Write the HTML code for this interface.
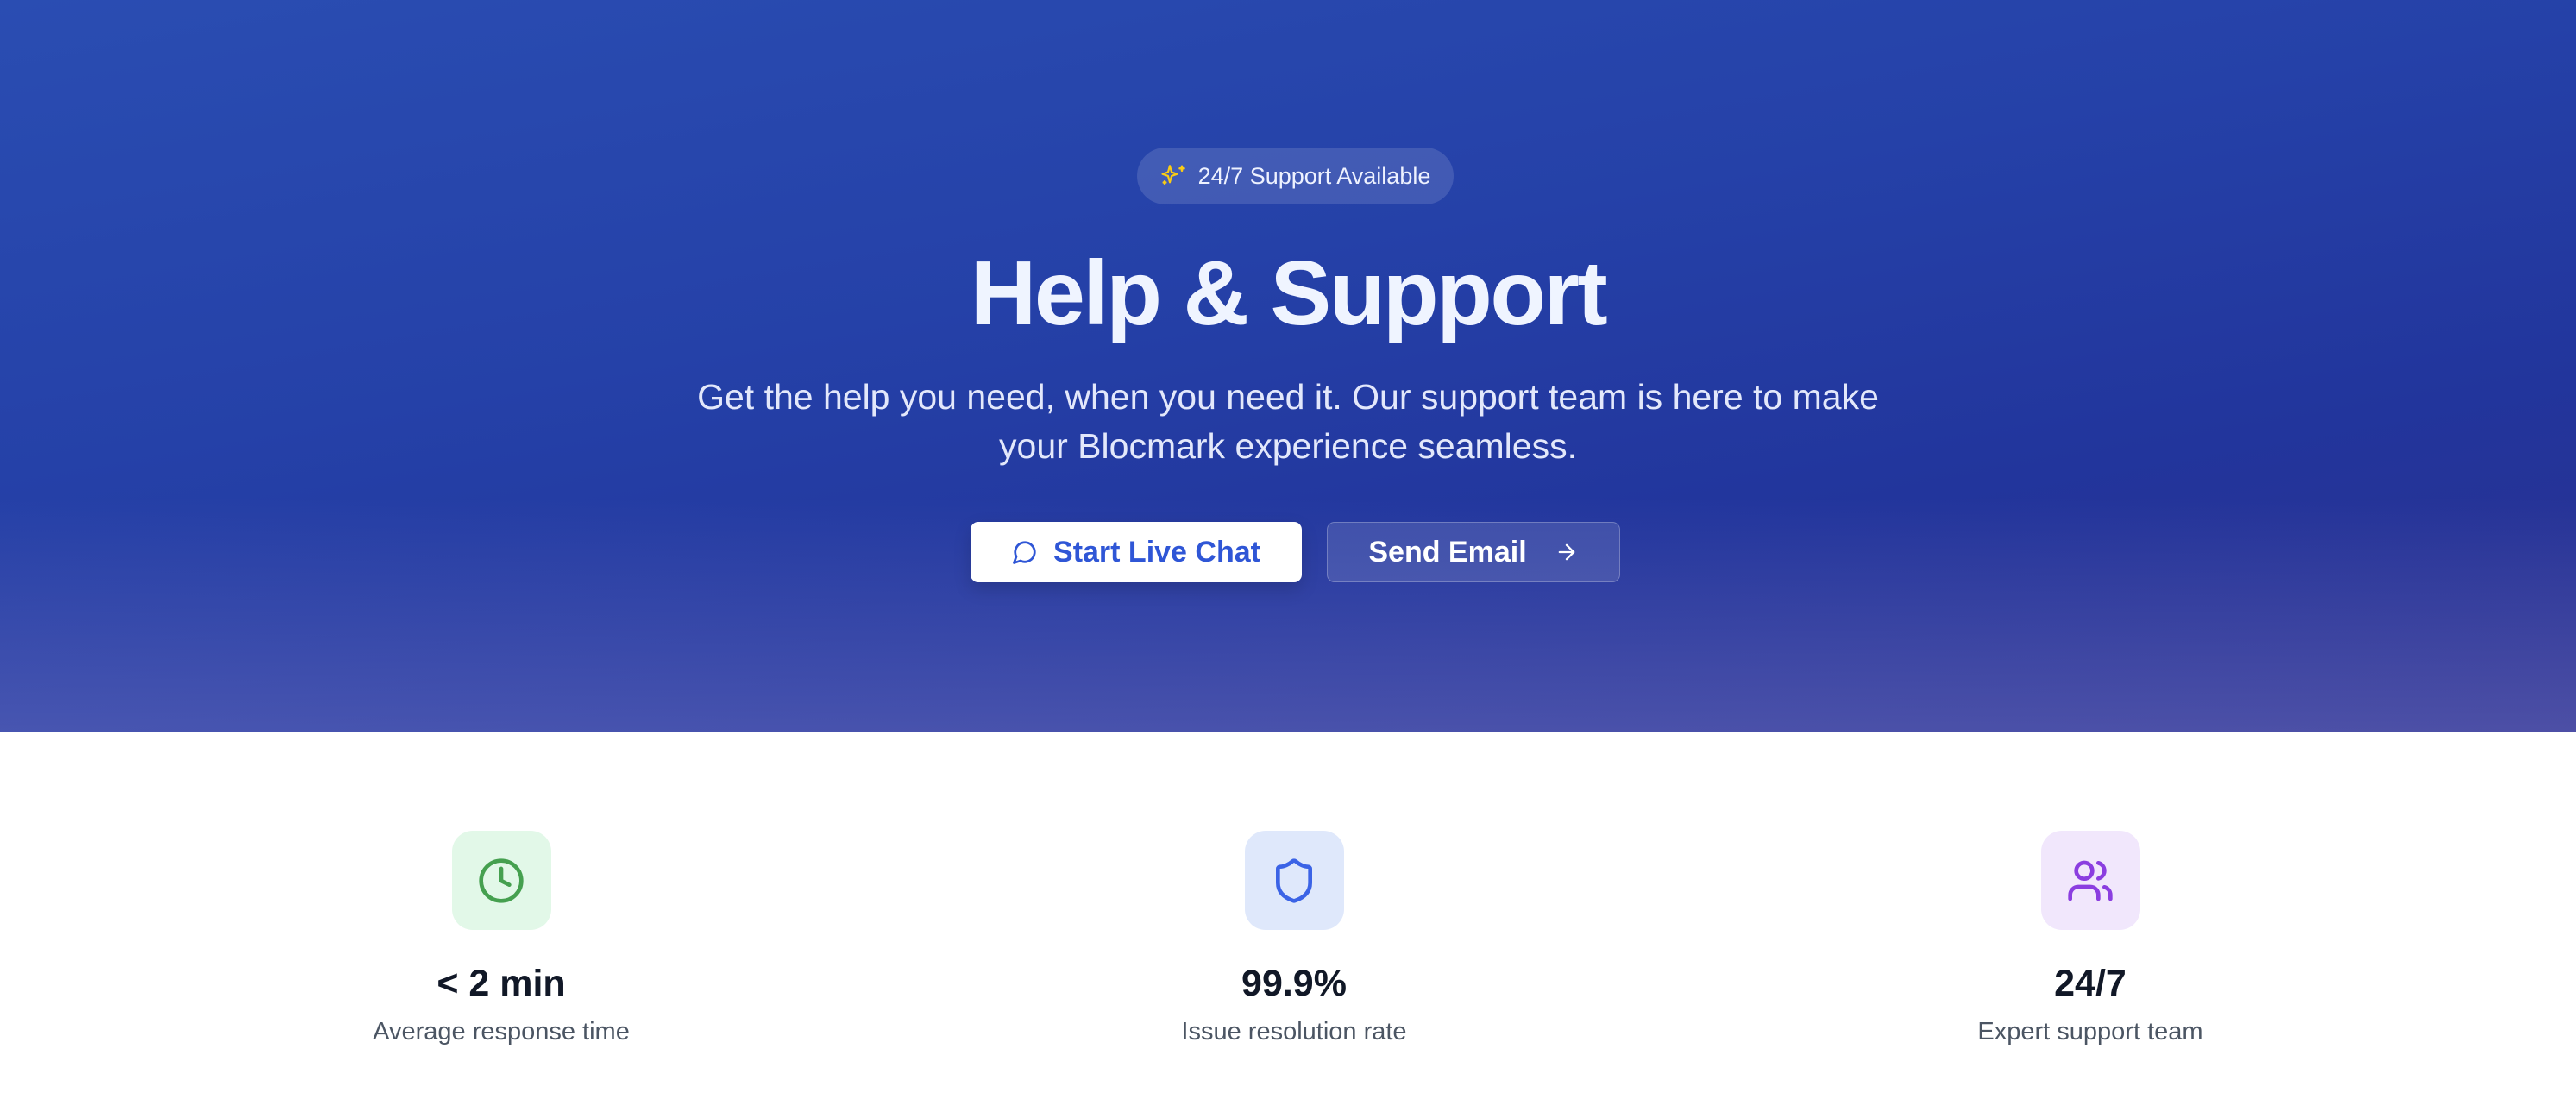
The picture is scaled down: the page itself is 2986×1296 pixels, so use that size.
<!DOCTYPE html>
<html><head><meta charset="utf-8"><style>
*{margin:0;padding:0;box-sizing:border-box}
body{width:2986px;height:1296px;overflow:hidden;background:#fff;font-family:"Liberation Sans",sans-serif}
.hero{position:absolute;left:0;top:0;width:2986px;height:849px;
background:
linear-gradient(180deg,rgba(255,255,255,0) 0%,rgba(255,255,255,0) 68%,rgba(140,140,210,0.35) 100%),
linear-gradient(170deg,#2a4db2 0%,#2541a8 40%,#22359c 70%,#2b2f8e 100%);}
.badge{position:absolute;left:1318px;top:171px;width:367px;height:66px;border-radius:33px;background:rgba(255,255,255,0.13);color:#eef2ff;font-size:27px;display:flex;align-items:center;justify-content:center;gap:14px}
h1{position:absolute;left:0;width:2986px;top:270px;text-align:center;color:#eff4ff;font-size:106px;font-weight:bold;letter-spacing:-2.5px;line-height:140px}
.sub{position:absolute;left:0;width:2986px;top:432px;text-align:center;color:#e3e8fb;font-size:41px;line-height:57px}
.btn{position:absolute;top:605px;height:70px;border-radius:9px;display:flex;align-items:center;justify-content:center;font-size:34px;font-weight:bold;gap:18px}
.b1{left:1125px;width:384px;background:#fff;color:#2f56d6;box-shadow:0 8px 20px rgba(0,0,0,0.15)}
.b2{left:1538px;width:340px;background:rgba(255,255,255,0.12);border:1.5px solid rgba(255,255,255,0.25);color:#fff}
.stat{position:absolute;top:963px;width:600px;text-align:center}
.ic{width:115px;height:115px;border-radius:24px;margin:0 auto;display:flex;align-items:center;justify-content:center}
.num{margin-top:32px;font-size:43px;font-weight:bold;color:#111827;line-height:60px}
.lab{margin-top:6px;font-size:29px;color:#4b5563;line-height:40px}
</style></head><body>
<div class="hero">
<div class="badge"><svg width="30" height="30" viewBox="0 0 24 24" fill="none" stroke="#facc15" stroke-width="2" stroke-linecap="round" stroke-linejoin="round"><path d="M9.94 14.06 8 21l-1.94-6.94L0 12l6.06-2.06L8 3l1.94 6.94L16 12z" transform="translate(2 0) scale(0.85)"/><path d="M20 3v4M22 5h-4M4 17v2M5 18H3"/></svg>24/7 Support Available</div>
<h1>Help &amp; Support</h1>
<div class="sub">Get the help you need, when you need it. Our support team is here to make<br>your Blocmark experience seamless.</div>
<div class="btn b1"><svg width="30" height="30" viewBox="0 0 24 24" fill="none" stroke="#2f56d6" stroke-width="2.2" stroke-linecap="round" stroke-linejoin="round"><path d="M7.9 20A9 9 0 1 0 4 16.1L2 22Z"/></svg>Start Live Chat</div>
<div class="btn b2">Send Email<svg width="28" height="28" viewBox="0 0 24 24" fill="none" stroke="#fff" stroke-width="2" stroke-linecap="round" stroke-linejoin="round" style="margin-left:14px"><path d="M5 12h14M12 5l7 7-7 7"/></svg></div>
</div>
<div class="stat" style="left:281px"><div class="ic" style="background:#e2f8e8"><svg width="56" height="56" viewBox="0 0 24 24" fill="none" stroke="#45a04f" stroke-width="2" stroke-linecap="round" stroke-linejoin="round"><circle cx="12" cy="12" r="10"/><path d="M12 6v6l4 2"/></svg></div><div class="num">&lt; 2 min</div><div class="lab">Average response time</div></div>
<div class="stat" style="left:1200px"><div class="ic" style="background:#dfe8fb"><svg width="56" height="56" viewBox="0 0 24 24" fill="none" stroke="#3b63e6" stroke-width="2" stroke-linecap="round" stroke-linejoin="round"><path d="M20 13c0 5-3.5 7.5-7.66 8.95a1 1 0 0 1-.67-.01C7.5 20.5 4 18 4 13V6a1 1 0 0 1 1-1c2 0 4.5-1.2 6.24-2.72a1.170 1.17 0 0 1 1.52 0C14.51 3.81 17 5 19 5a1 1 0 0 1 1 1z"/></svg></div><div class="num">99.9%</div><div class="lab">Issue resolution rate</div></div>
<div class="stat" style="left:2123px"><div class="ic" style="background:#f1e7fc"><svg width="56" height="56" viewBox="0 0 24 24" fill="none" stroke="#8b3ee0" stroke-width="2" stroke-linecap="round" stroke-linejoin="round"><path d="M16 21v-2a4 4 0 0 0-4-4H6a4 4 0 0 0-4 4v2"/><circle cx="9" cy="7" r="4"/><path d="M22 21v-2a4 4 0 0 0-3-3.870M16 3.13a4 4 0 0 1 0 7.75"/></svg></div><div class="num">24/7</div><div class="lab">Expert support team</div></div>
</body></html>
